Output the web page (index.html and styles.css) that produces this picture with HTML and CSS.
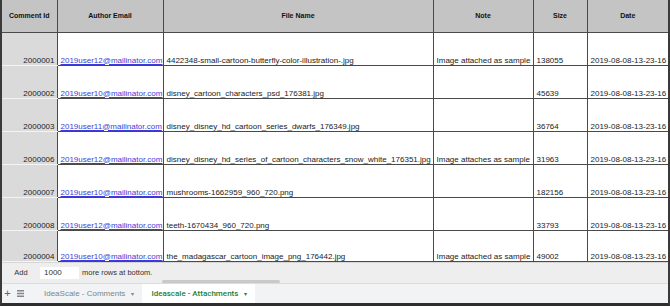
FILE: index.html
```html
<!DOCTYPE html>
<html lang="en">
<head>
  <meta charset="UTF-8">
  <title>IdeaScale - Attachments</title>
  <link rel="stylesheet" href="styles.css">
</head>
<body>
  <div class="frame">
    <table class="sheet">
      <colgroup>
        <col class="c-id">
        <col class="c-email">
        <col class="c-file">
        <col class="c-note">
        <col class="c-size">
        <col class="c-date">
      </colgroup>
      <thead>
        <tr>
          <th>Comment Id</th>
          <th>Author Email</th>
          <th>File Name</th>
          <th>Note</th>
          <th>Size</th>
          <th>Date</th>
        </tr>
      </thead>
      <tbody>
        <tr>
          <td class="num">2000001</td>
          <td><a href="#">2019user12@mailinator.com</a></td>
          <td>4422348-small-cartoon-butterfly-color-illustration-.jpg</td>
          <td>Image attached as sample</td>
          <td>138055</td>
          <td>2019-08-08-13-23-16</td>
        </tr>
        <tr>
          <td class="num">2000002</td>
          <td><a href="#">2019user10@mailinator.com</a></td>
          <td>disney_cartoon_characters_psd_176381.jpg</td>
          <td></td>
          <td>45639</td>
          <td>2019-08-08-13-23-16</td>
        </tr>
        <tr>
          <td class="num">2000003</td>
          <td><a href="#">2019user11@mailinator.com</a></td>
          <td>disney_disney_hd_cartoon_series_dwarfs_176349.jpg</td>
          <td></td>
          <td>36764</td>
          <td>2019-08-08-13-23-16</td>
        </tr>
        <tr>
          <td class="num">2000006</td>
          <td><a href="#">2019user12@mailinator.com</a></td>
          <td>disney_disney_hd_series_of_cartoon_characters_snow_white_176351.jpg</td>
          <td>Image attaches as sample</td>
          <td>31963</td>
          <td>2019-08-08-13-23-16</td>
        </tr>
        <tr>
          <td class="num">2000007</td>
          <td><a href="#">2019user10@mailinator.com</a></td>
          <td>mushrooms-1662959_960_720.png</td>
          <td></td>
          <td>182156</td>
          <td>2019-08-08-13-23-16</td>
        </tr>
        <tr>
          <td class="num">2000008</td>
          <td><a href="#">2019user12@mailinator.com</a></td>
          <td>teeth-1670434_960_720.png</td>
          <td></td>
          <td>33793</td>
          <td>2019-08-08-13-23-16</td>
        </tr>
        <tr>
          <td class="num">2000004</td>
          <td><a href="#">2019user10@mailinator.com</a></td>
          <td>the_madagascar_cartoon_image_png_176442.jpg</td>
          <td>Image attached as sample</td>
          <td>49002</td>
          <td>2019-08-08-13-23-16</td>
        </tr>
      </tbody>
    </table>

    <div class="add-rows">
      <span class="add-btn">Add</span>
      <span class="add-input">1000</span>
      <span class="add-label">more rows at bottom.</span>
      <div class="hscroll"></div>
    </div>

    <div class="tabbar">
      <span class="tab-icon plus">+</span>
      <span class="tab-icon">
        <svg width="7" height="7" viewBox="0 0 7 7">
          <rect x="0" y="0" width="7" height="1.5" fill="#80868b"/>
          <rect x="0" y="2.75" width="7" height="1.5" fill="#80868b"/>
          <rect x="0" y="5.5" width="7" height="1.5" fill="#80868b"/>
        </svg>
      </span>
      <div class="tab">IdeaScale - Comments <span class="caret">&#9662;</span></div>
      <div class="tab active">Ideascale - Attachments <span class="caret">&#9662;</span></div>
    </div>
  </div>
</body>
</html>
```

FILE: styles.css
```css
html, body {
  margin: 0;
  padding: 0;
  width: 670px;
  height: 306px;
  overflow: hidden;
  background: #fff;
  font-family: "Liberation Sans", Arial, sans-serif;
  color: #222;
}

.frame {
  box-sizing: border-box;
  width: 670px;
  height: 306px;
  border-left: 2px solid #3a3a3a;
  border-right: 2px solid #3a3a3a;
  border-bottom: 3px solid #2e2e2e;
  display: flex;
  flex-direction: column;
  overflow: hidden;
}

/* grid */
.sheet {
  border-collapse: collapse;
  table-layout: fixed;
  width: 666px;
  font-size: 8px;
  flex: none;
}

.c-id { width: 55px; }
.c-email { width: 106px; }
.c-file { width: 270px; }
.c-note { width: 100px; }
.c-size { width: 54px; }
.c-date { width: 81px; }

.sheet thead tr {
  height: 32px;
}

.sheet tbody tr {
  height: 33px;
}

.sheet tbody tr:last-child {
  height: 31px;
}

.sheet th {
  padding: 0;
  background: #c4c4c4;
  font-size: 7px;
  font-weight: bold;
  color: #111;
  text-align: center;
  vertical-align: middle;
  border-right: 1px solid #4a4a4a;
  border-bottom: 1px solid #4a4a4a;
}

.sheet td {
  height: 9px;
  padding: 0 2px 0 3px;
  line-height: 9px;
  vertical-align: bottom;
  white-space: nowrap;
  overflow: hidden;
  border-right: 1px solid #4a4a4a;
  border-bottom: 1px solid #4a4a4a;
}

.sheet th:last-child,
.sheet td:last-child {
  border-right: none;
}

.sheet td.num {
  text-align: right;
  padding: 0 2px 0 0;
  background: #dadada;
  border-bottom-color: #f4f4f4;
}

.sheet a {
  color: #3f3bd9;
  text-decoration: underline;
}

/* add more rows */
.add-rows {
  position: relative;
  flex: none;
  height: 20px;
  background: #eeeeee;
  display: flex;
  align-items: center;
  font-size: 7.5px;
  color: #333;
  border-top: 1px solid #d6d6d6;
}

.add-btn {
  margin-left: 11px;
  width: 16px;
  text-align: center;
}

.add-input {
  margin-left: 11px;
  width: 35px;
  height: 12px;
  line-height: 12px;
  padding-left: 4px;
  background: #fff;
  font-size: 8px;
}

.add-label {
  margin-left: 3px;
}

.hscroll {
  position: absolute;
  left: 160px;
  bottom: 0;
  width: 118px;
  height: 3px;
  border-radius: 2px;
  background: #c9c9c9;
}

/* sheet tabs */
.tabbar {
  flex: 1;
  display: flex;
  align-items: stretch;
  background: #f1f3f4;
  border-top: 1px solid #dadce0;
  font-size: 8px;
  color: #80868b;
}

.tab-icon {
  display: flex;
  align-items: center;
  justify-content: center;
  width: 14px;
}

.tab-icon.plus {
  width: 11px;
  font-size: 11px;
  color: #5f6368;
}

.tab {
  display: flex;
  align-items: center;
  padding: 0 8px 0 17px;
  white-space: nowrap;
}

.tab .caret {
  margin-left: 6px;
  font-size: 6px;
}

.tab.active {
  background: #fff;
  color: #188038;
  font-family: Roboto, "Liberation Sans", sans-serif;
  font-weight: 500;
  padding: 0 8px 0 9px;
}
```
